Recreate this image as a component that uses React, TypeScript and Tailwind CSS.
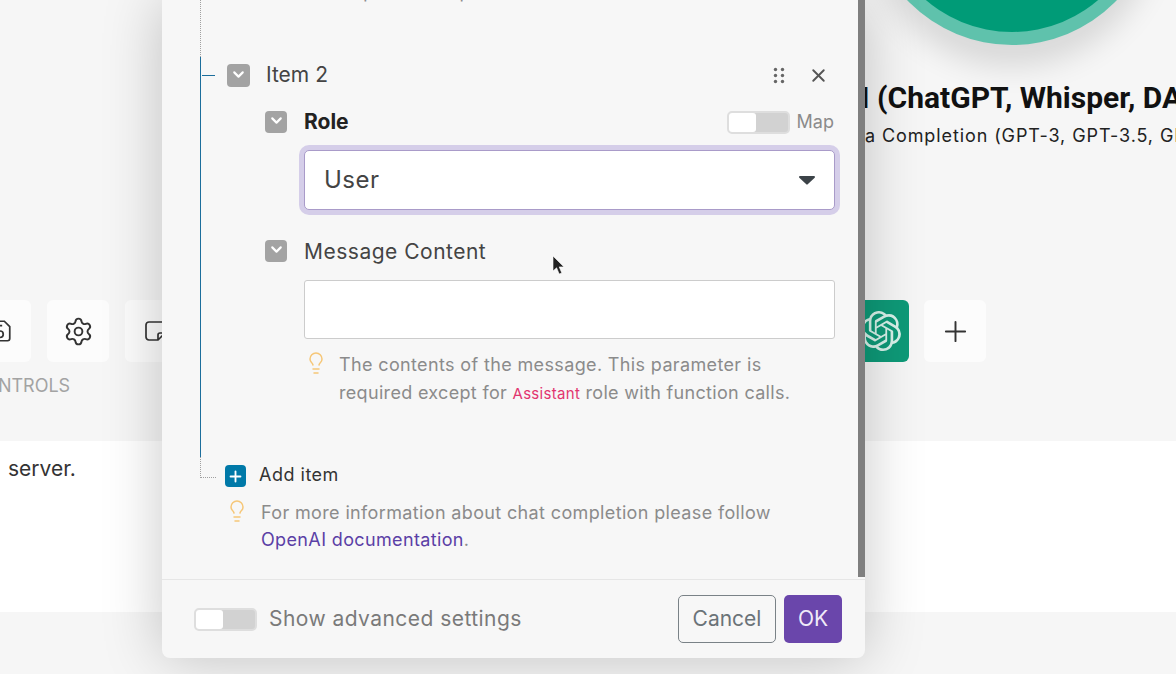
import { ChevronDown, Lightbulb, Plus, Settings, X } from 'lucide-react';
import { SiOpenai } from 'react-icons/si';

function Toggle() {
  return (
    <div className="flex h-[23px] w-[63px] shrink-0 items-center rounded-[5px] border-2 border-[#dedede] bg-[#d2d2d2]">
      <div className="h-[19px] w-[27px] rounded-[3px] bg-white" />
    </div>
  );
}

function Chevron({ size = 'h-[22px] w-[22px]' }: { size?: string }) {
  return (
    <div className={`flex shrink-0 items-center justify-center rounded-[4px] bg-[#a3a3a3] ${size}`}>
      <ChevronDown size={17} strokeWidth={3} className="-mt-[3px] text-white" />
    </div>
  );
}

function Bulb() {
  return <Lightbulb size={24} strokeWidth={1.5} className="shrink-0 text-[#f6c778]" />;
}

function ToolButton({ children }: { children?: React.ReactNode }) {
  return (
    <div className="flex h-[62px] w-[62px] shrink-0 items-center justify-center rounded-[6px] bg-[#fcfcfc]">
      {children}
    </div>
  );
}

function Assistant() {
  return <span className="text-[15px] tracking-[0.3px] text-[#e2356f]">Assistant</span>;
}

export default function App() {
  return (
    <div className="relative h-[674px] w-[1176px] overflow-hidden bg-[#f6f6f6] font-['Inter',sans-serif]">
      {/* page behind the dialog */}
      <div className="h-[300px] pl-[712px]">
        <div className="flex w-[600px] flex-col items-center">
          <div className="-mt-[245px] h-[290px] w-[290px] shrink-0 rounded-full bg-[#5fc2ac] p-[13px] shadow-[0_22px_30px_rgba(0,0,0,0.12)]">
            <div className="h-[264px] w-[264px] rounded-full bg-[#009b77]" />
          </div>
          <div className="mt-[33px] whitespace-nowrap font-['Roboto',sans-serif] text-[30px] font-bold leading-[40px] text-[#111]">
            OpenAI (ChatGPT, Whisper, DALL-E)
          </div>
          <div className="mt-[6px] whitespace-nowrap text-[18px] leading-[24px] tracking-[0.9px] text-[#222]">
            Create a Completion (GPT-3, GPT-3.5, GPT-4)
          </div>
        </div>
      </div>

      <div className="flex h-[62px] -ml-[31px] gap-[16px]">
        <ToolButton>
          <svg width="26" height="26" viewBox="0 0 24 24" fill="none" stroke="#333" strokeWidth="1.6">
            <path d="M3 5a2 2 0 0 1 2-2h11l5 5v11a2 2 0 0 1-2 2H5a2 2 0 0 1-2-2z" />
            <circle cx="12" cy="15" r="3" />
            <path d="M7 3v4h7" />
          </svg>
        </ToolButton>
        <ToolButton>
          <Settings size={31} strokeWidth={1.5} className="text-[#333]" />
        </ToolButton>
        <ToolButton>
          <svg width="24" height="24" viewBox="0 0 24 24" fill="none" stroke="#333" strokeWidth="1.7">
            <path d="M12 21H5a3 3 0 0 1-3-3V6a3 3 0 0 1 3-3h14a3 3 0 0 1 3 3v7l-8 8zM14 21v-5a2 2 0 0 1 2-2h6" />
          </svg>
        </ToolButton>
        <div className="ml-[644px] flex h-[62px] w-[62px] shrink-0 items-center justify-end rounded-[6px] bg-[#0e9a78] pr-[8px]">
          <SiOpenai size={40} className="text-[#d8f2ea]" />
        </div>
        <div className="-ml-px">
          <ToolButton>
            <Plus size={33} strokeWidth={1.4} className="text-[#333]" />
          </ToolButton>
        </div>
      </div>
      <div className="h-[79px] pt-[13px] text-[18px] leading-[22px] text-[#a3a3a3]">
        <span className="-ml-[29px] inline-block">CONTROLS</span>
      </div>
      <div className="h-[171px] bg-white pl-[8px] pt-[15px] text-[21px] leading-[26px] text-[#333]">server.</div>

      {/* dialog */}
      <div className="absolute left-[162px] top-0 flex h-[658px] w-[703px] flex-col rounded-b-[8px] bg-[#f7f7f7] shadow-[0_0_60px_rgba(0,0,0,0.22)]">
        <div className="flex h-[577px] shrink-0 flex-col justify-end overflow-hidden border-r-[7px] border-[#7f7f7f] pb-[24px] pl-[38px] pr-[23px]">
          <div className="shrink-0 border-l border-dotted border-[#a0a0a0] pb-[50px] pl-[138px] text-[18px] leading-[28px] tracking-[0.32px] text-[#8b8b8b] whitespace-nowrap">
            required except for <Assistant /> role with function calls.
          </div>

          <div className="h-[400px] shrink-0 border-l border-[#1c6e9c] pt-[7px]">
            <div className="flex h-[23px] items-center">
              <div className="ml-px h-px w-[13px] bg-[#1c6e9c]" />
              <Chevron size="ml-[12px] h-[23px] w-[23px]" />
              <div className="ml-[16px] -mt-px text-[21px] text-[#444]">Item 2</div>
              <svg className="ml-auto" width="12" height="17" viewBox="0 0 12 17" fill="#666">
                <circle cx="2.5" cy="2.5" r="1.7" />
                <circle cx="9.5" cy="2.5" r="1.7" />
                <circle cx="2.5" cy="8.5" r="1.7" />
                <circle cx="9.5" cy="8.5" r="1.7" />
                <circle cx="2.5" cy="14.5" r="1.7" />
                <circle cx="9.5" cy="14.5" r="1.7" />
              </svg>
              <X size={21} strokeWidth={2.2} className="ml-[23px] mr-[6px] text-[#555]" />
            </div>

            <div className="ml-[64px]">
              <div className="mt-[24px] flex h-[22px] items-center">
                <Chevron />
                <div className="ml-[17px] -mt-px text-[21px] font-bold text-[#222]">Role</div>
                <div className="ml-auto flex items-center gap-[7px] pr-px">
                  <Toggle />
                  <span className="-mt-[2px] text-[18px] text-[#8b8b8b]">Map</span>
                </div>
              </div>

              <div className="ml-[39px]">
                <div className="mt-[17px] flex h-[60px] items-center justify-between rounded-[5px] border border-[#a99bc9] bg-white pl-[19px] pr-[19px] shadow-[0_0_0_5px_#d5cee9]">
                  <span className="text-[24px] tracking-[0.5px] text-[#444]">User</span>
                  <svg width="16" height="9" viewBox="0 0 16 9" fill="#3c4348">
                    <path d="M1 0h14a1 1 0 0 1 .7 1.7L8.7 8.3a1 1 0 0 1-1.4 0L.3 1.7A1 1 0 0 1 1 0z" />
                  </svg>
                </div>
              </div>

              <div className="mt-[30px] flex h-[22px] items-center">
                <Chevron />
                <div className="ml-[17px] mt-[2px] text-[21px] tracking-[0.5px] text-[#444]">Message Content</div>
              </div>

              <div className="ml-[39px]">
                <div className="mt-[18px] h-[59px] rounded-[3px] border border-[#cccccc] bg-white" />
                <div className="mt-[12px] flex gap-[11px]">
                  <Bulb />
                  <p className="text-[18px] leading-[28px] tracking-[0.36px] text-[#8b8b8b] whitespace-nowrap">
                    The contents of the message. This parameter is
                    <br />
                    <span className="tracking-[0.32px]">
                      required except for <Assistant /> role with function calls.
                    </span>
                  </p>
                </div>
              </div>
            </div>
          </div>

          <div className="flex h-[30px] shrink-0">
            <div className="h-[21px] w-[16px] border-b border-l border-dotted border-[#a0a0a0]" />
            <div className="ml-[9px] mt-[8px] flex h-[22px] w-[21px] items-center justify-center rounded-[4px] bg-[#0079a8]">
              <Plus size={17} strokeWidth={2.6} className="text-white" />
            </div>
            <div className="ml-[13px] mt-[6px] text-[18px] leading-[24px] tracking-[0.5px] text-[#333]">Add item</div>
          </div>

          <div className="mt-[12px] flex shrink-0 gap-[12px] pl-[25px]">
            <Bulb />
            <p className="text-[18px] leading-[27px] tracking-[0.36px] text-[#8b8b8b] whitespace-nowrap">
              For more information about chat completion please follow
              <br />
              <span className="text-[#5b3fa6]">OpenAI documentation</span>.
            </p>
          </div>
        </div>

        <div className="mt-[2px] flex flex-1 items-center border-t border-[#e6e6e6] pl-[32px] pr-[23px]">
          <Toggle />
          <span className="ml-[12px] text-[21px] tracking-[0.45px] text-[#7a7a7a]">Show advanced settings</span>
          <div className="ml-auto flex gap-[8px]">
            <div className="flex h-[48px] w-[98px] items-center justify-center rounded-[5px] border border-[#7a8287] text-[21px] text-[#6b7378]">
              Cancel
            </div>
            <div className="flex h-[48px] w-[58px] items-center justify-center rounded-[5px] bg-[#6a46ab] text-[21px] text-[#f0eaf8]">
              OK
            </div>
          </div>
        </div>
      </div>

      {/* mouse pointer */}
      <svg className="absolute left-[552px] top-[255px]" width="14" height="22" viewBox="0 0 14 22" fill="#222" stroke="#fff" strokeWidth="0.6">
        <path d="M1 1v15l3.6-3.2 2.6 6.2 2.6-1.1-2.6-6h4.8z" />
      </svg>
    </div>
  );
}
